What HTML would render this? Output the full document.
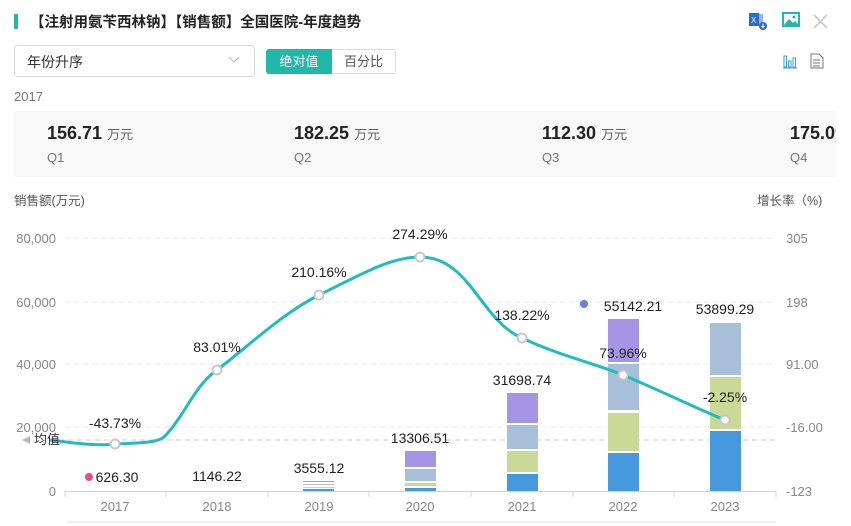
<!DOCTYPE html>
<html><head><meta charset="utf-8"><style>
body{margin:0;width:851px;height:526px;background:#fff;font-family:"Liberation Sans","Noto Sans CJK SC",sans-serif;position:relative;overflow:hidden;color:#333}
.a{position:absolute;white-space:nowrap}
</style></head><body>
<div class="a" style="left:14px;top:14px;width:4px;height:15px;background:#22b8a8"></div>
<div class="a" style="left:30px;top:11px;font-size:14.5px;font-weight:bold;color:#222">【注射用氨苄西林钠】【销售额】全国医院-年度趋势</div>
<svg class="a" style="left:748px;top:11px" width="20" height="20" viewBox="0 0 20 20"><rect x="7" y="3" width="8" height="12" fill="#9bb5e0"/><rect x="1" y="2" width="10" height="13" fill="#2a6bd1"/><text x="3" y="12" font-size="8" fill="#fff" font-family="Liberation Sans">X</text><circle cx="15" cy="15" r="4" fill="#2a6bd1"/><path d="M15 12.5v4M13.5 15l1.5 1.5 1.5-1.5" stroke="#fff" fill="none"/></svg>
<svg class="a" style="left:782px;top:12px" width="18" height="16" viewBox="0 0 18 16"><rect x="1" y="1" width="16" height="13" fill="none" stroke="#22b8a8" stroke-width="2"/><path d="M2 13l5-6 4 4 2-2 4 4z" fill="#22b8a8"/><circle cx="12" cy="5" r="1.5" fill="#22b8a8"/></svg>
<svg class="a" style="left:813px;top:14px" width="15" height="15"><path d="M1 1l13 13M14 1L1 14" stroke="#c8c8c8" stroke-width="1.6"/></svg>
<svg class="a" style="left:782px;top:53px" width="16" height="16"><path d="M1 15h14" stroke="#3aa0d0"/><rect x="2" y="3" width="2.5" height="11" fill="none" stroke="#3aa0d0"/><rect x="6.5" y="8" width="2.5" height="6" fill="none" stroke="#3aa0d0"/><rect x="11" y="5" width="2.5" height="9" fill="none" stroke="#3aa0d0"/></svg>
<svg class="a" style="left:810px;top:53px" width="14" height="16"><path d="M1 1h8l4 4v10H1z" fill="none" stroke="#777"/><path d="M3 7h7M3 10h7M3 13h7" stroke="#777"/></svg>
<div class="a" style="left:14px;top:45px;width:239px;height:30px;border:1px solid #dcdcdc;border-radius:3px"></div>
<div class="a" style="left:27px;top:52px;font-size:14px;color:#333">年份升序</div>
<svg class="a" style="left:228px;top:56px" width="12" height="8"><path d="M1 1l5 5 5-5" stroke="#bbb" fill="none"/></svg>
<div class="a" style="left:266px;top:49px;width:66px;height:25px;background:#22b8a8;border-radius:3px 0 0 3px;color:#fff;font-size:13px;line-height:25px;text-align:center">绝对值</div>
<div class="a" style="left:332px;top:49px;width:63px;height:23px;border:1px solid #dcdcdc;border-left:none;border-radius:0 3px 3px 0;color:#555;font-size:13px;line-height:23px;text-align:center">百分比</div>
<div class="a" style="left:14px;top:89px;font-size:13px;color:#777">2017</div>
<div class="a" style="left:14px;top:111px;width:822px;height:66px;background:#f8f8f8"></div>
<div class="a" style="left:47px;top:123px;font-size:18px;font-weight:bold;color:#222">156.71 <span style="font-size:13px;font-weight:normal;color:#666">万元</span></div>
<div class="a" style="left:47px;top:150px;font-size:13px;color:#777">Q1</div>
<div class="a" style="left:294px;top:123px;font-size:18px;font-weight:bold;color:#222">182.25 <span style="font-size:13px;font-weight:normal;color:#666">万元</span></div>
<div class="a" style="left:294px;top:150px;font-size:13px;color:#777">Q2</div>
<div class="a" style="left:542px;top:123px;font-size:18px;font-weight:bold;color:#222">112.30 <span style="font-size:13px;font-weight:normal;color:#666">万元</span></div>
<div class="a" style="left:542px;top:150px;font-size:13px;color:#777">Q3</div>
<div class="a" style="left:790px;top:123px;font-size:18px;font-weight:bold;color:#222;width:46px;overflow:hidden">175.09</div>
<div class="a" style="left:790px;top:150px;font-size:13px;color:#777">Q4</div>
<div class="a" style="left:14px;top:190px;font-size:12.5px;color:#555">销售额(万元)</div>
<div class="a" style="left:757px;top:190px;font-size:12.5px;color:#555">增长率（%)</div>
<svg class="a" style="left:0;top:0" width="851" height="526" font-family="Liberation Sans" font-size="13">
<g stroke="#e3e8ee" stroke-dasharray="5,4"><path d="M65 238H775M65 302H775M65 364H775M65 427H775"/></g>
<path d="M50 440H775" stroke="#ccc" stroke-dasharray="5,4"/>
<g fill="#888" text-anchor="end" font-size="13"><text x="56" y="243">80,000</text><text x="56" y="307">60,000</text><text x="56" y="369">40,000</text><text x="56" y="432">20,000</text><text x="56" y="496">0</text></g>
<g fill="#888" font-size="13"><text x="786" y="243">305</text><text x="786" y="307">198</text><text x="786" y="369">91.00</text><text x="786" y="432">-16.00</text><text x="786" y="496">-123</text></g>
<path d="M65 491.5H776" stroke="#ccd3dc"/>
<g stroke="#ccd3dc"><path d="M65 491v6M166 491v6M268 491v6M369 491v6M471 491v6M573 491v6M674 491v6M776 491v6"/></g>
<path d="M67 522H776" stroke="#dde3ea"/>
<g fill="#888" text-anchor="middle" font-size="13"><text x="115" y="511">2017</text><text x="217" y="511">2018</text><text x="319" y="511">2019</text><text x="420" y="511">2020</text><text x="522" y="511">2021</text><text x="623" y="511">2022</text><text x="725" y="511">2023</text></g>
<g fill="#a496e5"><rect x="303" y="481" width="31" height="1"/><rect x="405" y="451" width="31" height="16"/><rect x="507" y="393" width="31" height="30"/><rect x="608" y="319" width="31" height="43"/></g>
<g fill="#a7bfd9"><rect x="303" y="484" width="31" height="1"/><rect x="405" y="469" width="31" height="12"/><rect x="507" y="425" width="31" height="24"/><rect x="608" y="364" width="31" height="46"/><rect x="710" y="323" width="31" height="52"/></g>
<g fill="#cbd996"><rect x="303" y="487" width="31" height="1"/><rect x="405" y="483" width="31" height="3"/><rect x="507" y="451" width="31" height="21"/><rect x="608" y="413" width="31" height="38"/><rect x="710" y="377" width="31" height="52"/></g>
<g fill="#4599dc"><rect x="303" y="489" width="31" height="2"/><rect x="405" y="488" width="31" height="3"/><rect x="507" y="474" width="31" height="17"/><rect x="608" y="453" width="31" height="38"/><rect x="710" y="431" width="31" height="60"/></g>
<path d="M50 440 C 80 444,100 446,115 444 C 145 443,160 442,165 436 C 185 415,195 385,217 370 C 250 345,280 315,319 295 C 360 275,390 257,420 257 C 470 257,480 320,522 338 C 560 356,600 365,623 375 C 670 395,700 410,725 420" fill="none" stroke="#22bcbc" stroke-width="3"/>
<path d="M22 440l8-4v8z" fill="#bbb"/>
<text x="34" y="444" fill="#333">均值</text>
<g fill="#fff" stroke="#c8c8c8" stroke-width="2"><circle cx="115" cy="444" r="4.5"/><circle cx="217" cy="370" r="4.5"/><circle cx="319" cy="295" r="4.5"/><circle cx="420" cy="257" r="4.5"/><circle cx="522" cy="338" r="4.5"/><circle cx="623" cy="375" r="4.5"/><circle cx="725" cy="420" r="4.5"/></g>
<g fill="#222" text-anchor="middle" font-size="14"><text x="115" y="428">-43.73%</text><text x="217" y="352">83.01%</text><text x="319" y="277">210.16%</text><text x="420" y="239">274.29%</text><text x="522" y="320">138.22%</text><text x="623" y="358">73.96%</text><text x="725" y="402">-2.25%</text>
<text x="117" y="482">626.30</text><text x="217" y="481">1146.22</text><text x="319" y="473">3555.12</text><text x="420" y="443">13306.51</text><text x="522" y="385">31698.74</text><text x="633" y="311">55142.21</text><text x="725" y="314">53899.29</text></g>
<circle cx="89" cy="477" r="4" fill="#e84a8a"/>
<circle cx="584" cy="304" r="4" fill="#6a7de0"/>
</svg>
</body></html>
